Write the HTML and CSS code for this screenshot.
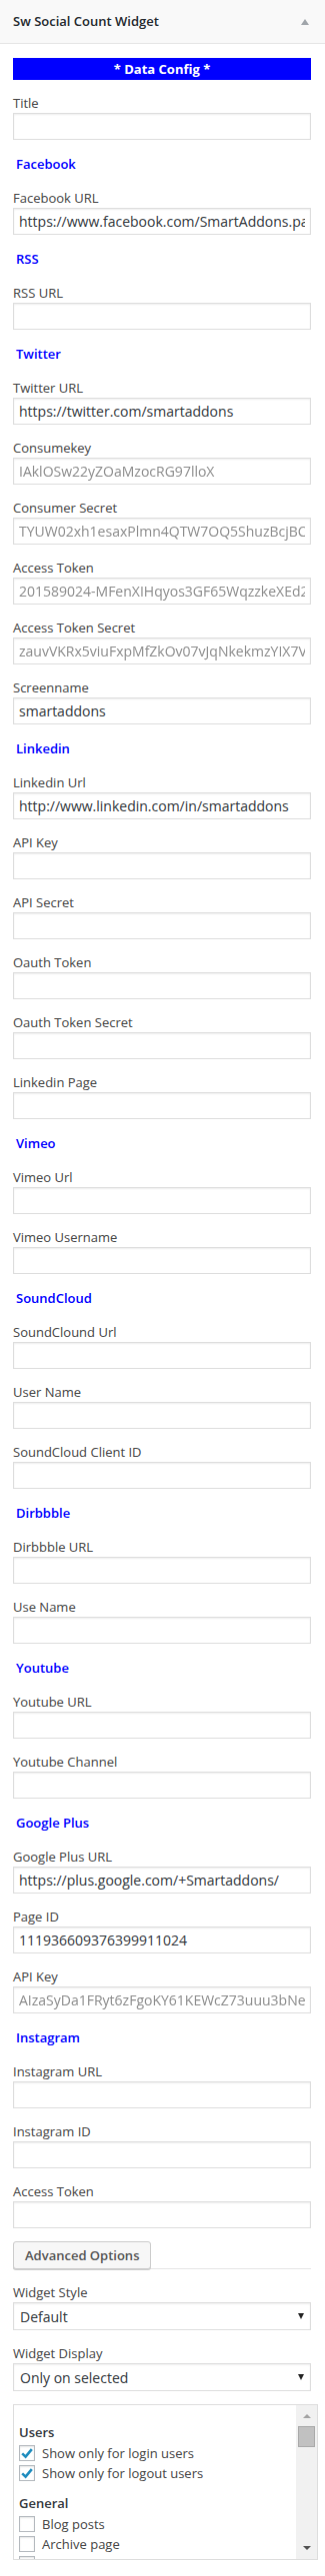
FILE: index.html
```html
<!DOCTYPE html>
<html lang="en">
<head>
<meta charset="utf-8">
<title>Sw Social Count Widget</title>
<link rel="stylesheet" href="styles.css">
</head>
<body>
<div class="widget">
  <div class="widget-top">
    <h3 class="widget-title">Sw Social Count Widget</h3>
    <span class="toggle"></span>
  </div>
  <div class="widget-inside">
    <div class="banner">* Data Config *</div>

    <div class="field"><label class="lbl">Title</label><input class="text" type="text" value=""></div>

    <h4 class="network">Facebook</h4>
    <div class="field"><label class="lbl">Facebook URL</label><input class="text" type="text" value="https://www.facebook.com/SmartAddons.page"></div>

    <h4 class="network">RSS</h4>
    <div class="field"><label class="lbl">RSS URL</label><input class="text" type="text" value=""></div>

    <h4 class="network">Twitter</h4>
    <div class="field"><label class="lbl">Twitter URL</label><input class="text" type="text" value="https://twitter.com/smartaddons"></div>
    <div class="field"><label class="lbl">Consumekey</label><input class="text blur" type="text" value="IAklOSw22yZOaMzocRG97lloX"></div>
    <div class="field"><label class="lbl">Consumer Secret</label><input class="text blur" type="text" value="TYUW02xh1esaxPlmn4QTW7OQ5ShuzBcjBCv9"></div>
    <div class="field"><label class="lbl">Access Token</label><input class="text blur" type="text" value="201589024-MFenXIHqyos3GF65WqzzkeXEd2"></div>
    <div class="field"><label class="lbl">Access Token Secret</label><input class="text blur" type="text" value="zauvVKRx5viuFxpMfZkOv07vJqNkekmzYIX7Vw"></div>
    <div class="field"><label class="lbl">Screenname</label><input class="text" type="text" value="smartaddons"></div>

    <h4 class="network">Linkedin</h4>
    <div class="field"><label class="lbl">Linkedin Url</label><input class="text" type="text" value="http://www.linkedin.com/in/smartaddons"></div>
    <div class="field"><label class="lbl">API Key</label><input class="text" type="text" value=""></div>
    <div class="field"><label class="lbl">API Secret</label><input class="text" type="text" value=""></div>
    <div class="field"><label class="lbl">Oauth Token</label><input class="text" type="text" value=""></div>
    <div class="field"><label class="lbl">Oauth Token Secret</label><input class="text" type="text" value=""></div>
    <div class="field"><label class="lbl">Linkedin Page</label><input class="text" type="text" value=""></div>

    <h4 class="network">Vimeo</h4>
    <div class="field"><label class="lbl">Vimeo Url</label><input class="text" type="text" value=""></div>
    <div class="field"><label class="lbl">Vimeo Username</label><input class="text" type="text" value=""></div>

    <h4 class="network">SoundCloud</h4>
    <div class="field"><label class="lbl">SoundClound Url</label><input class="text" type="text" value=""></div>
    <div class="field"><label class="lbl">User Name</label><input class="text" type="text" value=""></div>
    <div class="field"><label class="lbl">SoundCloud Client ID</label><input class="text" type="text" value=""></div>

    <h4 class="network">Dirbbble</h4>
    <div class="field"><label class="lbl">Dirbbble URL</label><input class="text" type="text" value=""></div>
    <div class="field"><label class="lbl">Use Name</label><input class="text" type="text" value=""></div>

    <h4 class="network">Youtube</h4>
    <div class="field"><label class="lbl">Youtube URL</label><input class="text" type="text" value=""></div>
    <div class="field"><label class="lbl">Youtube Channel</label><input class="text" type="text" value=""></div>

    <h4 class="network">Google Plus</h4>
    <div class="field"><label class="lbl">Google Plus URL</label><input class="text" type="text" value="https://plus.google.com/+Smartaddons/"></div>
    <div class="field"><label class="lbl">Page ID</label><input class="text" type="text" value="111936609376399911024"></div>
    <div class="field"><label class="lbl">API Key</label><input class="text blur" type="text" value="AIzaSyDa1FRyt6zFgoKY61KEWcZ73uuu3bNe"></div>

    <h4 class="network">Instagram</h4>
    <div class="field"><label class="lbl">Instagram URL</label><input class="text" type="text" value=""></div>
    <div class="field"><label class="lbl">Instagram ID</label><input class="text" type="text" value=""></div>
    <div class="field"><label class="lbl">Access Token</label><input class="text" type="text" value=""></div>

    <div class="adv-bar"><button class="btn" type="button">Advanced Options</button></div>

    <div class="field"><label class="lbl">Widget Style</label>
      <div class="select-wrap"><select class="select"><option>Default</option></select></div>
    </div>
    <div class="field"><label class="lbl">Widget Display</label>
      <div class="select-wrap"><select class="select"><option>Only on selected</option></select></div>
    </div>

    <div class="multibox">
      <div class="multi-content">
        <div class="group-title">Users</div>
        <div class="check-row"><span class="cb checked"><svg viewBox="0 0 16 16" width="16" height="16"><path d="M3.2 8.4 L6.6 11.6 L12.8 4.2" fill="none" stroke="#1e8cbe" stroke-width="2.6" stroke-linecap="butt" stroke-linejoin="miter"/></svg></span><span class="cb-text">Show only for login users</span></div>
        <div class="check-row"><span class="cb checked"><svg viewBox="0 0 16 16" width="16" height="16"><path d="M3.2 8.4 L6.6 11.6 L12.8 4.2" fill="none" stroke="#1e8cbe" stroke-width="2.6" stroke-linecap="butt" stroke-linejoin="miter"/></svg></span><span class="cb-text">Show only for logout users</span></div>
        <div class="group-title group-gap">General</div>
        <div class="check-row"><span class="cb"></span><span class="cb-text">Blog posts</span></div>
        <div class="check-row"><span class="cb"></span><span class="cb-text">Archive page</span></div>
        <div class="check-row"><span class="cb"></span><span class="cb-text">Category page</span></div>
      </div>
      <div class="scrollbar">
        <span class="sb-up"></span>
        <span class="sb-thumb"></span>
        <span class="sb-down"></span>
      </div>
    </div>
  </div>
</div>
</body>
</html>
```
FILE: styles.css
```css
html, body {
  margin: 0;
  padding: 0;
  background: #fff;
}

body {
  font-family: "Open Sans", "Liberation Sans", Arial, sans-serif;
  font-size: 13px;
  color: #444;
}

.widget {
  width: 325px;
}

.widget-top {
  height: 43px;
  background: #f9f9f9;
  border-bottom: 1px solid #e5e5e5;
  display: flex;
  align-items: center;
  justify-content: space-between;
  padding: 0 16px 0 13px;
}

.widget-title {
  margin: 0;
  font-size: 13px;
  font-weight: 600;
  color: #23282d;
  line-height: 1;
}

.toggle {
  width: 0;
  height: 0;
  border-left: 4px solid transparent;
  border-right: 4px solid transparent;
  border-bottom: 6px solid #a0a5aa;
  margin-top: 1px;
}

.widget-inside {
  padding: 14px 14px 0 13px;
}

.banner {
  background: #0000ff;
  color: #fff;
  height: 22px;
  line-height: 22px;
  text-align: center;
  font-size: 13px;
  font-weight: 700;
  margin-bottom: 13px;
}

.field {
  margin: 0 0 13px;
}

.lbl {
  display: block;
  line-height: 20px;
  font-size: 13px;
  color: #444;
}

.text {
  display: block;
  box-sizing: border-box;
  width: 100%;
  height: 27px;
  margin: 0;
  padding: 0 5px;
  border: 1px solid #ddd;
  border-radius: 0;
  background: #fff;
  box-shadow: inset 0 1px 2px rgba(0, 0, 0, 0.07);
  font-family: "Open Sans", "Liberation Sans", Arial, sans-serif;
  font-size: 14px;
  color: #32373c;
  outline: none;
}

.text.blur {
  color: #8c8c8c;
  filter: blur(0.6px);
}

.network {
  margin: 0 0 13px;
  padding-left: 3px;
  font-size: 13px;
  font-weight: 600;
  line-height: 22px;
  color: #0000ff;
}

.adv-bar {
  border-bottom: 1px solid #e5e5e5;
  margin: 0 0 13px;
  display: flex;
}

.btn {
  height: 28px;
  margin: 0 0 -1px;
  padding: 0 11px;
  border: 1px solid #ccc;
  border-radius: 3px;
  background: #f7f7f7;
  box-shadow: 0 1px 0 #ccc;
  font-family: "Open Sans", "Liberation Sans", Arial, sans-serif;
  font-size: 13px;
  font-weight: 600;
  color: #555;
  cursor: pointer;
}

.select-wrap {
  position: relative;
}

.select-wrap::after {
  content: "";
  position: absolute;
  right: 7px;
  top: 11px;
  width: 0;
  height: 0;
  border-left: 3px solid transparent;
  border-right: 3px solid transparent;
  border-top: 6px solid #222;
  pointer-events: none;
}

.select {
  display: block;
  box-sizing: border-box;
  width: 100%;
  height: 28px;
  margin: 0;
  padding: 0 6px;
  border: 1px solid #ddd;
  border-radius: 0;
  background: #fff;
  box-shadow: inset 0 1px 2px rgba(0, 0, 0, 0.07);
  font-family: "Open Sans", "Liberation Sans", Arial, sans-serif;
  font-size: 14px;
  color: #32373c;
  -webkit-appearance: none;
  appearance: none;
  outline: none;
}

.multibox {
  box-sizing: border-box;
  width: 305px;
  height: 156px;
  border: 1px solid #ddd;
  display: flex;
  overflow: hidden;
}

.multi-content {
  flex: 1;
  padding: 16px 0 0 5px;
  overflow: hidden;
}

.group-title {
  font-size: 13px;
  font-weight: 600;
  line-height: 22px;
  color: #32373c;
}

.group-gap {
  margin-top: 9px;
}

.check-row {
  display: flex;
  align-items: center;
  height: 20px;
  gap: 7px;
}

.cb {
  box-sizing: border-box;
  width: 16px;
  height: 16px;
  flex: none;
  border: 1px solid #b4b9be;
  background: #fff;
  box-shadow: inset 0 1px 2px rgba(0, 0, 0, 0.1);
  position: relative;
}

.cb svg {
  position: absolute;
  left: -1px;
  top: -1px;
}

.cb-text {
  font-size: 13px;
  color: #444;
  white-space: nowrap;
}

.scrollbar {
  width: 21px;
  flex: none;
  background: #f1f1f1;
  display: flex;
  flex-direction: column;
  align-items: center;
  padding: 9px 0 9px;
  box-sizing: border-box;
}

.sb-up {
  width: 0;
  height: 0;
  border-left: 4px solid transparent;
  border-right: 4px solid transparent;
  border-bottom: 4px solid #a3a3a3;
}

.sb-thumb {
  box-sizing: border-box;
  width: 17px;
  height: 21px;
  margin-top: 8px;
  background: #c1c1c1;
  border: 1px solid #a9a9a9;
}

.sb-down {
  margin-top: auto;
  width: 0;
  height: 0;
  border-left: 4px solid transparent;
  border-right: 4px solid transparent;
  border-top: 4px solid #505050;
}
```
